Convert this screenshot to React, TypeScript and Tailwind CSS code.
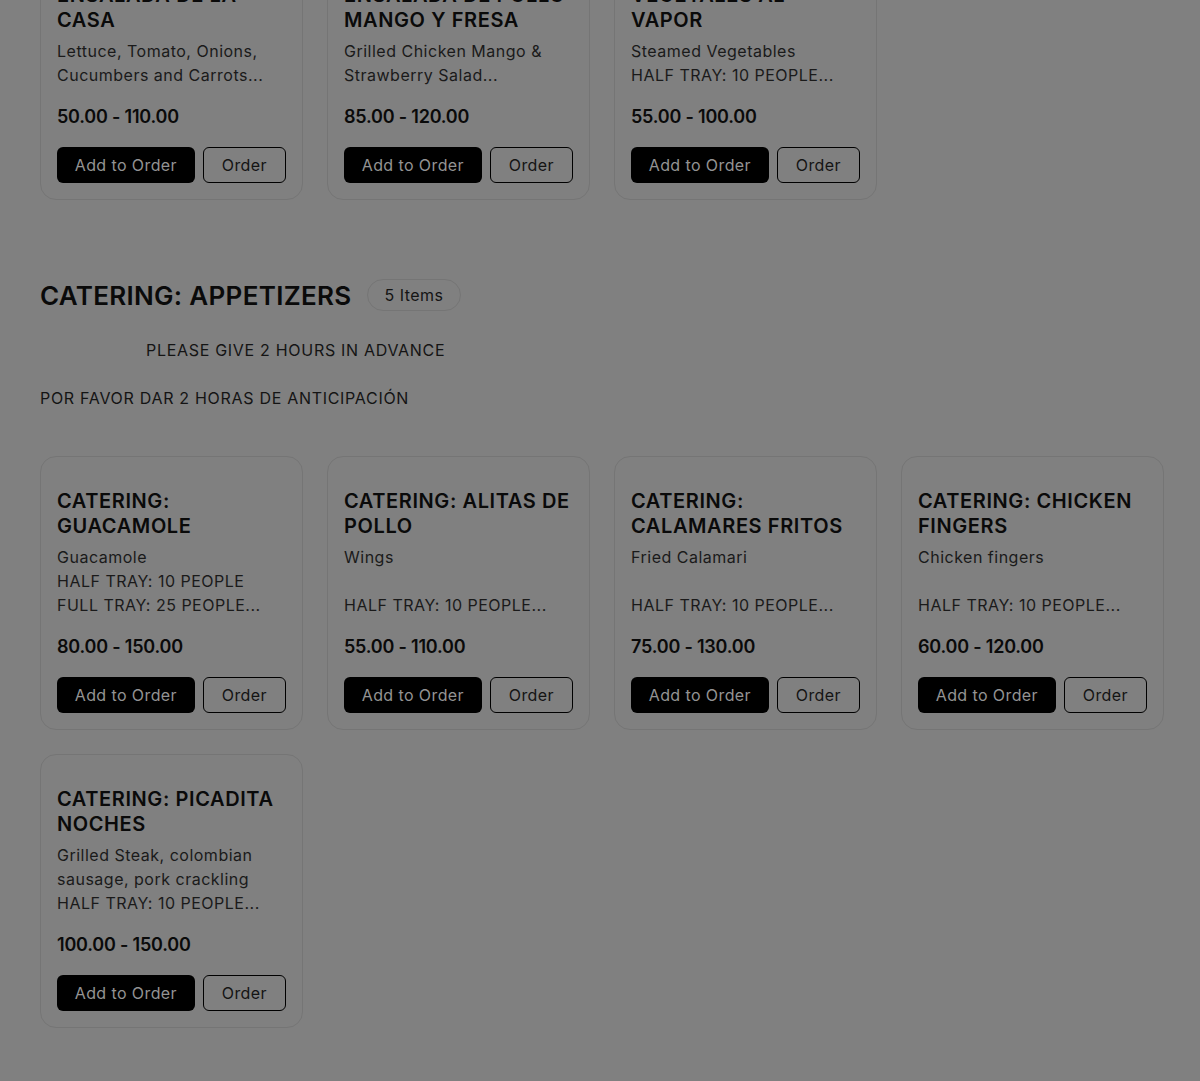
import React from 'react';

type Item = {
    title: string[];
    desc: string[];
    price: string;
};

const salads: Item[] = [
    { title: ['ENSALADA DE LA', 'CASA'], desc: ['Lettuce, Tomato, Onions,', 'Cucumbers and Carrots...'], price: '50.00 - 110.00' },
    { title: ['ENSALADA DE POLLO', 'MANGO Y FRESA'], desc: ['Grilled Chicken Mango &', 'Strawberry Salad...'], price: '85.00 - 120.00' },
    { title: ['VEGETALES AL', 'VAPOR'], desc: ['Steamed Vegetables', 'HALF TRAY: 10 PEOPLE...'], price: '55.00 - 100.00' },
];

const appetizers: Item[] = [
    { title: ['CATERING:', 'GUACAMOLE'], desc: ['Guacamole', 'HALF TRAY: 10 PEOPLE', 'FULL TRAY: 25 PEOPLE...'], price: '80.00 - 150.00' },
    { title: ['CATERING: ALITAS DE', 'POLLO'], desc: ['Wings', '', 'HALF TRAY: 10 PEOPLE...'], price: '55.00 - 110.00' },
    { title: ['CATERING:', 'CALAMARES FRITOS'], desc: ['Fried Calamari', '', 'HALF TRAY: 10 PEOPLE...'], price: '75.00 - 130.00' },
    { title: ['CATERING: CHICKEN', 'FINGERS'], desc: ['Chicken fingers', '', 'HALF TRAY: 10 PEOPLE...'], price: '60.00 - 120.00' },
    { title: ['CATERING: PICADITA', 'NOCHES'], desc: ['Grilled Steak, colombian', 'sausage, pork crackling', 'HALF TRAY: 10 PEOPLE...'], price: '100.00 - 150.00' },
];

const MenuCard = ({ item }: { item: Item }) => (
    <div className="flex flex-col rounded-2xl border border-[#757575] px-4 pt-8 pb-4">
        <h3 className="text-[20px] leading-[25px] font-semibold tracking-[0.6px] text-[#0a0a0a]">
            {item.title.map((line, i) => (
                <span key={i} className="block whitespace-nowrap">{line}</span>
            ))}
        </h3>
        <div className="mt-1.5 text-[16px] leading-6 tracking-[0.5px] text-[#1a1a1a]">
            {item.desc.map((line, i) => (
                <p key={i} className="h-6 whitespace-nowrap">{line}</p>
            ))}
        </div>
        <div className="mt-4 text-[18px] leading-7 font-semibold tracking-[-0.2px] text-[#0a0a0a]">{item.price}</div>
        <div className="mt-4 flex gap-2">
            <button className="h-9 w-[139px] rounded-md bg-black text-[16px] tracking-[0.4px] text-[#939393]">
                Add to Order
            </button>
            <button className="h-9 w-[84px] rounded-md border border-black text-[16px] tracking-[0.4px] text-[#141414]">
                Order
            </button>
        </div>
    </div>
);

export default function App() {
    return (
        <div className="min-h-[1081px] w-full overflow-hidden bg-[#808080] font-['Inter',sans-serif]">
            <div className="ml-10 w-[1124px] pb-[55px]">
                {/* Salads (scrolled past) */}
                <div className="-mt-[50px] grid grid-cols-4 gap-6">
                    {salads.map((item, i) => (
                        <MenuCard key={i} item={item} />
                    ))}
                </div>

                {/* Appetizers */}
                <section className="mt-[77px]">
                    <div className="flex h-9 items-center">
                        <h2 className="text-[26px] font-semibold tracking-[0.3px] text-[#0a0a0a]">CATERING: APPETIZERS</h2>
                        <span className="ml-4 flex h-8 items-center rounded-full border border-[#757575] px-4 text-[16px] tracking-[0.5px] text-[#141414]">
                            5 Items
                        </span>
                    </div>
                    <div className="mt-[25px] text-[16px] leading-6 tracking-[0.7px] text-[#141414]">
                        <p className="pl-[106px]">PLEASE GIVE 2 HOURS IN ADVANCE</p>
                        <p className="h-6"></p>
                        <p>POR FAVOR DAR 2 HORAS DE ANTICIPACIÓN</p>
                    </div>
                    <div className="mt-[46px] grid grid-cols-4 gap-6">
                        {appetizers.map((item, i) => (
                            <MenuCard key={i} item={item} />
                        ))}
                    </div>
                </section>
            </div>
        </div>
    );
}
